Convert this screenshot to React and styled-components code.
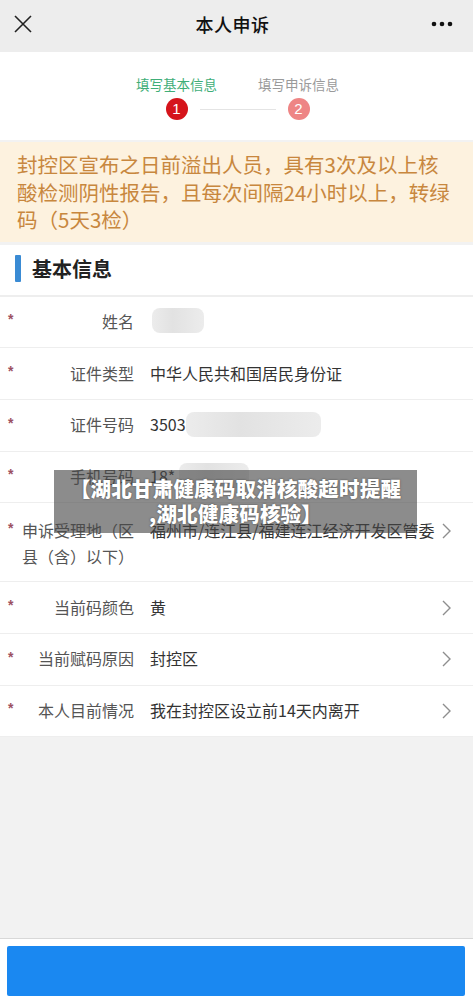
import React from "react";
import styled, { createGlobalStyle } from "styled-components";

const Global = createGlobalStyle`
  html, body { margin: 0; padding: 0; background: #f2f2f2; }
  body { font-family: "Noto Sans CJK SC", "Noto Sans", sans-serif; }
  * { box-sizing: border-box; }
`;

const Page = styled.div`
  position: relative;
  width: 473px;
  height: 1004px;
  display: flex;
  flex-direction: column;
  background: #f2f2f2;
  overflow: hidden;
`;

const Header = styled.div`
  height: 52px;
  background: #ededed;
  display: flex;
  align-items: center;
  justify-content: space-between;
  padding: 0 20px 4px 12px;
`;

const Title = styled.div`
  font-size: 18px;
  font-weight: 500;
  color: #111;
  letter-spacing: 0.5px;
`;

const IconBtn = styled.div`
  width: 22px;
  height: 22px;
  display: flex;
  align-items: center;
  justify-content: center;
`;

const Steps = styled.div`
  background: #fff;
  height: 88px;
  display: flex;
  justify-content: center;
  align-items: flex-start;
  padding: 23px 0 0 2px;
  gap: 36px;
`;

const Step = styled.div`
  display: flex;
  flex-direction: column;
  align-items: center;
  gap: 5px;
  position: relative;
  width: 86px;
`;

const StepLabel = styled.div`
  font-size: 13.5px;
  line-height: 18px;
  color: ${(p) => (p.$active ? "#3fae78" : "#9a9a9a")};
  white-space: nowrap;
`;

const StepDot = styled.div`
  width: 22px;
  height: 22px;
  border-radius: 50%;
  background: ${(p) => (p.$active ? "#d5141b" : "#ee8585")};
  color: #fff;
  font-size: 15px;
  line-height: 22px;
  text-align: center;
  font-family: "Liberation Sans", sans-serif;
`;

const StepLine = styled.div`
  position: absolute;
  top: 34px;
  left: 66px;
  width: 76px;
  height: 1px;
  background: #e4e4e4;
`;

const Notice = styled.div`
  background: #fdf2df;
  color: #c8873e;
  font-size: 20.5px;
  line-height: 27.5px;
  padding: 9px 14px 8px 17px;
  margin-top: 2px;
`;

const SectionHead = styled.div`
  background: #fff;
  height: 52px;
  margin-top: 3px;
  display: flex;
  align-items: center;
  padding: 0 0 2px 15px;
  gap: 11px;
  border-bottom: 2px solid #eeeeee;
`;

const Bar = styled.div`
  width: 6px;
  height: 27px;
  background: #3a8bd4;
  border-radius: 1px;
`;

const SectionTitle = styled.div`
  font-size: 20px;
  font-weight: 700;
  color: #222;
`;

const List = styled.div`
  background: #fff;
`;

const Row = styled.div`
  display: flex;
  align-items: ${(p) => (p.$tall ? "flex-start" : "center")};
  min-height: 51.7px;
  padding: ${(p) => (p.$tall ? "14px 22px 12px 8px" : "0 22px 2px 8px")};
  border-bottom: 1.5px solid #eeeeee;
  position: relative;
  font-size: 16px;
  line-height: 26px;
`;

const Star = styled.span`
  width: 14px;
  flex: none;
  color: #9c5062;
  font-size: 14px;
  font-weight: 700;
  align-self: ${(p) => (p.$tall ? "flex-start" : "center")};
  margin-top: ${(p) => (p.$tall ? "-2px" : "-3px")};
  font-family: "Liberation Sans", sans-serif;
`;

const Label = styled.div`
  width: 112px;
  flex: none;
  text-align: right;
  color: #555;
`;

const TallLabel = styled.div`
  color: #555;
  width: 112px;
  flex: none;
`;

const Value = styled.div`
  flex: 1;
  color: #333;
  margin-left: 16px;
  white-space: nowrap;
  overflow: hidden;
  display: flex;
  align-items: center;
`;

const TallValue = styled(Value)`
  position: absolute;
  left: 150px;
  right: 38px;
  top: 14px;
  margin: 0;
`;

const Blur = styled.span`
  display: inline-block;
  width: ${(p) => p.$w}px;
  height: 25px;
  border-radius: 8px;
  background: linear-gradient(90deg, #ececec, #e2e2e2 40%, #ececec);
  margin-left: ${(p) => p.$ml || 0}px;
`;

const Chevron = styled.div`
  position: absolute;
  right: 22px;
  top: ${(p) => (p.$tall ? "20px" : "50%")};
  transform: ${(p) => (p.$tall ? "none" : "translateY(-50%)")};
  width: 9px;
  height: 16px;
  display: flex;
`;

const Fill = styled.div`
  flex: 1;
  background: #f2f2f2;
  border-bottom: 1px solid #d8d8d8;
  box-shadow: 0 1px 2px rgba(0, 0, 0, 0.08);
`;

const Footer = styled.div`
  height: 65px;
  background: #fff;
  padding: 7px 8px 8px 7px;
  display: flex;
`;

const Submit = styled.button`
  flex: 1;
  border: none;
  background: #1a88f1;
  border-radius: 2px;
  height: 50px;
`;

const Overlay = styled.div`
  position: absolute;
  left: 54px;
  top: 470px;
  width: 363px;
  height: 63px;
  background: rgba(70, 70, 70, 0.62);
  color: #fff;
  font-weight: 900;
  font-size: 20.5px;
  line-height: 25px;
  text-align: center;
  padding-top: 6px;
  text-shadow: 0 0 2px rgba(0, 0, 0, 0.5);
  letter-spacing: 0.2px;
`;

const ChevronIcon = () => (
  <svg width="9" height="16" viewBox="0 0 9 16">
    <path d="M1 1 L8 8 L1 15" fill="none" stroke="#8e8e8e" strokeWidth="1.4" />
  </svg>
);

const rows = [
  { label: "姓名", value: <Blur $w={52} $ml={2} /> },
  { label: "证件类型", value: "中华人民共和国居民身份证" },
  {
    label: "证件号码",
    value: (
      <>
        3503
        <Blur $w={135} />
      </>
    ),
  },
  {
    label: "手机号码",
    value: (
      <>
        18*
        <Blur $w={70} $ml={4} />
      </>
    ),
  },
];

const rows2 = [
  { label: "当前码颜色", value: "黄" },
  { label: "当前赋码原因", value: "封控区" },
  { label: "本人目前情况", value: "我在封控区设立前14天内离开" },
];

export default function App() {
  return (
    <Page>
      <Global />
      <Header>
        <IconBtn>
          <svg width="20" height="20" viewBox="0 0 20 20">
            <path d="M2 2 L18 18 M18 2 L2 18" stroke="#222" strokeWidth="1.6" />
          </svg>
        </IconBtn>
        <Title>本人申诉</Title>
        <IconBtn>
          <svg width="22" height="6" viewBox="0 0 22 6">
            <circle cx="3" cy="3" r="2.3" fill="#111" />
            <circle cx="11" cy="3" r="2.3" fill="#111" />
            <circle cx="19" cy="3" r="2.3" fill="#111" />
          </svg>
        </IconBtn>
      </Header>
      <Steps>
        <Step>
          <StepLabel $active>填写基本信息</StepLabel>
          <StepDot $active>1</StepDot>
          <StepLine />
        </Step>
        <Step>
          <StepLabel>填写申诉信息</StepLabel>
          <StepDot>2</StepDot>
        </Step>
      </Steps>
      <Notice>
        封控区宣布之日前溢出人员，具有3次及以上核
        <br />
        酸检测阴性报告，且每次间隔24小时以上，转绿
        <br />
        码（5天3检）
      </Notice>
      <SectionHead>
        <Bar />
        <SectionTitle>基本信息</SectionTitle>
      </SectionHead>
      <List>
        {rows.map((r) => (
          <Row key={r.label}>
            <Star>*</Star>
            <Label>{r.label}</Label>
            <Value>{r.value}</Value>
          </Row>
        ))}
        <Row $tall>
          <Star $tall>*</Star>
          <TallLabel>申诉受理地（区县（含）以下）</TallLabel>
          <TallValue>福州市/连江县/福建连江经济开发区管委会</TallValue>
          <Chevron $tall>
            <ChevronIcon />
          </Chevron>
        </Row>
        {rows2.map((r) => (
          <Row key={r.label}>
            <Star>*</Star>
            <Label>{r.label}</Label>
            <Value>{r.value}</Value>
            <Chevron>
              <ChevronIcon />
            </Chevron>
          </Row>
        ))}
      </List>
      <Fill />
      <Footer>
        <Submit aria-label="提交" />
      </Footer>
      <Overlay>
        【湖北甘肃健康码取消核酸超时提醒
        <br />
        ,湖北健康码核验】
      </Overlay>
    </Page>
  );
}
